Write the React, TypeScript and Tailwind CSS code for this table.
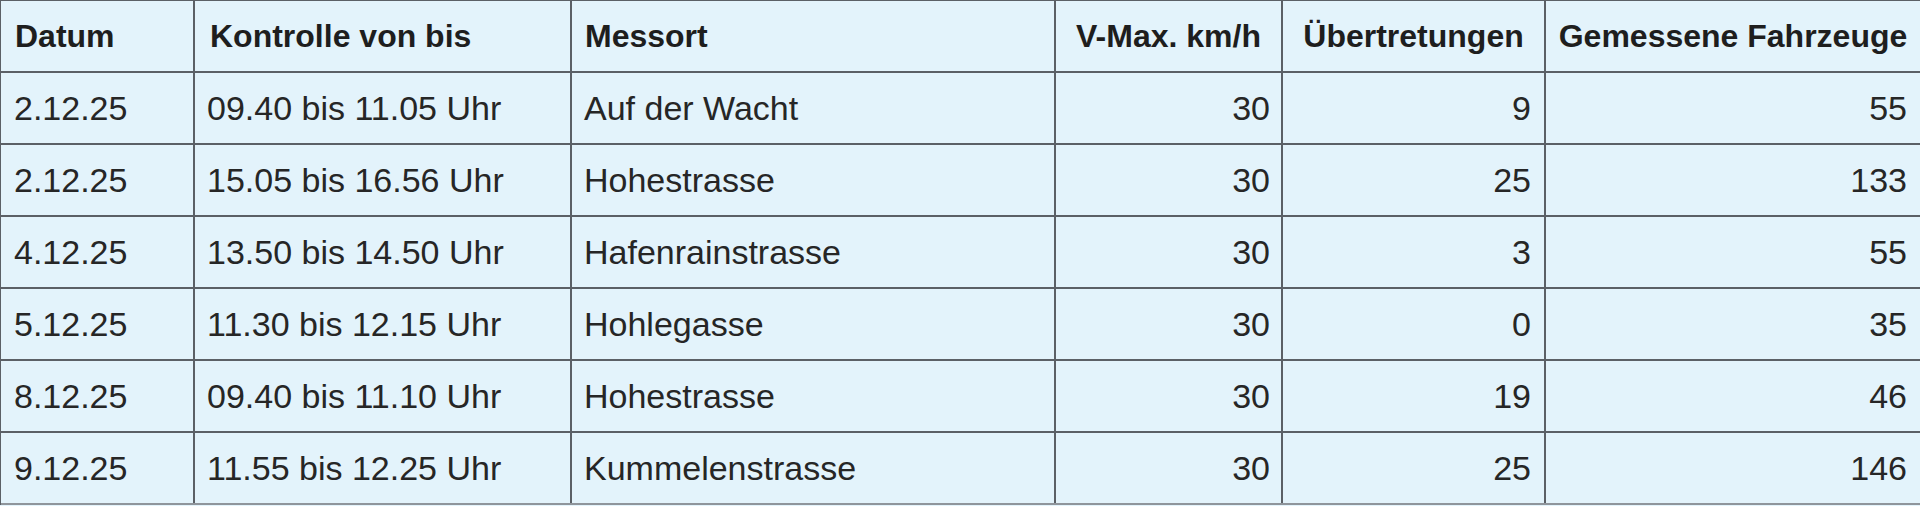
import React from "react";

const rows = [
  ["2.12.25", "09.40 bis 11.05 Uhr", "Auf der Wacht", "30", "9", "55"],
  ["2.12.25", "15.05 bis 16.56 Uhr", "Hohestrasse", "30", "25", "133"],
  ["4.12.25", "13.50 bis 14.50 Uhr", "Hafenrainstrasse", "30", "3", "55"],
  ["5.12.25", "11.30 bis 12.15 Uhr", "Hohlegasse", "30", "0", "35"],
  ["8.12.25", "09.40 bis 11.10 Uhr", "Hohestrasse", "30", "19", "46"],
  ["9.12.25", "11.55 bis 12.25 Uhr", "Kummelenstrasse", "30", "25", "146"],
];

export default function App() {
  return (
    <div
      className="min-h-screen w-[1920px] bg-[#e3f3fb] text-[#222222]"
      style={{ fontFamily: '"Liberation Sans", Arial, sans-serif' }}
    >
      <div className="border-l border-t border-[#5b6066]">
        {/* header */}
        <div className="flex h-[72px] border-b-2 border-[#5b6066] text-[32px] font-bold text-[#1e1e1e]">
          <div className="flex w-[194px] items-center border-r-2 border-[#5b6066] pl-[14px]">Datum</div>
          <div className="flex w-[377px] items-center border-r-2 border-[#5b6066] pl-[15px]">Kontrolle von bis</div>
          <div className="flex w-[484px] items-center border-r-2 border-[#5b6066] pl-[13px]">Messort</div>
          <div className="flex w-[227px] items-center justify-center whitespace-nowrap border-r-2 border-[#5b6066]">V-Max. km/h</div>
          <div className="flex w-[263px] items-center justify-center whitespace-nowrap border-r-2 border-[#5b6066]">Übertretungen</div>
          <div className="flex flex-1 items-center justify-center whitespace-nowrap">Gemessene Fahrzeuge</div>
        </div>
        {rows.map((r, i) => (
          <div
            key={i}
            className={
              i === rows.length - 1
                ? "flex h-[72px] border-b-2 border-[#8f959b] text-[34px] text-[#262626]"
                : "flex h-[72px] border-b-2 border-[#5b6066] text-[34px] text-[#262626]"
            }
          >
            <div className="flex w-[194px] items-center border-r-2 border-[#5b6066] pl-[13px]">{r[0]}</div>
            <div className="flex w-[377px] items-center whitespace-nowrap border-r-2 border-[#5b6066] pl-[12px]">{r[1]}</div>
            <div className="flex w-[484px] items-center whitespace-nowrap border-r-2 border-[#5b6066] pl-[12px]">{r[2]}</div>
            <div className="flex w-[227px] items-center justify-end border-r-2 border-[#5b6066] pr-[11px]">{r[3]}</div>
            <div className="flex w-[263px] items-center justify-end border-r-2 border-[#5b6066] pr-[13px]">{r[4]}</div>
            <div className="flex flex-1 items-center justify-end pr-[13px]">{r[5]}</div>
          </div>
        ))}
      </div>
    </div>
  );
}
